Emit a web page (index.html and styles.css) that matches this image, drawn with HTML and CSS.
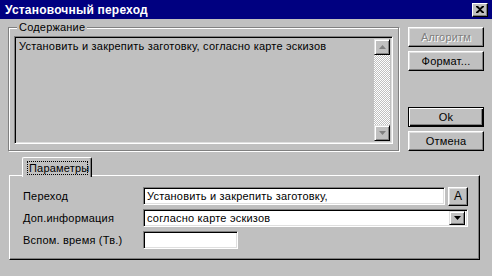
FILE: index.html
```html
<!DOCTYPE html>
<html lang="ru">
<head>
    <meta charset="UTF-8">
    <title>Установочный переход</title>
    <link rel="stylesheet" href="styles.css">
</head>
<body>
    <div class="dialog">
        <div class="titlebar">
            <span class="title">Установочный переход</span>
            <div class="close">
                <svg width="8" height="7" viewBox="0 0 8 7">
                    <path d="M0 0h2l2 2 2-2h2v1l-3 2.5 3 2.5v1h-2l-2-2-2 2h-2v-1l3-2.5-3-2.5z" fill="#000"/>
                </svg>
            </div>
        </div>

        <div class="top">
            <div class="group">
                <span class="group-label">Содержание</span>
                <div class="memo">
                    <div class="memo-text">Установить и закрепить заготовку, согласно карте эскизов</div>
                    <div class="vscroll">
                        <div class="sbtn">
                            <svg width="7" height="4" viewBox="0 0 7 4"><path d="M3.5 0L7 4H0z" fill="#808080"/></svg>
                        </div>
                        <div class="track"></div>
                        <div class="sbtn">
                            <svg width="7" height="4" viewBox="0 0 7 4"><path d="M0 0h7L3.5 4z" fill="#808080"/></svg>
                        </div>
                    </div>
                </div>
            </div>

            <div class="buttons">
                <div class="btn disabled">Алгоритм</div>
                <div class="btn">Формат...</div>
                <div class="spacer"></div>
                <div class="btn default">Ok</div>
                <div class="btn">Отмена</div>
            </div>
        </div>

        <div class="tabs">
            <div class="tab"><span class="focus">Параметры</span></div>
        </div>
        <div class="panel">
            <div class="row">
                <span class="label">Переход</span>
                <div class="field wide">Установить и закрепить заготовку,</div>
                <div class="btn small">A</div>
            </div>
            <div class="row">
                <span class="label">Доп.информация</span>
                <div class="field combo">
                    <span class="combo-text">согласно карте эскизов</span>
                    <div class="drop">
                        <svg width="7" height="4" viewBox="0 0 7 4"><path d="M0 0h7L3.5 4z" fill="#000"/></svg>
                    </div>
                </div>
            </div>
            <div class="row">
                <span class="label">Вспом. время (Тв.)</span>
                <div class="field short"></div>
            </div>
        </div>
    </div>
</body>
</html>
```

FILE: styles.css
```css
* {
    box-sizing: border-box;
}

body {
    margin: 0;
    font-family: "Liberation Sans", Arial, sans-serif;
    font-size: 11px;
    letter-spacing: 0.2px;
    color: #000;
    background-color: #c0c0c0;
}

.dialog {
    width: 492px;
    height: 276px;
    background-color: #c0c0c0;
}

.titlebar {
    height: 19px;
    display: flex;
    align-items: center;
    padding: 0 4px 0 5px;
    background-color: #000080;
    color: #fff;
    font-weight: bold;
    font-size: 12px;
}

.close {
    margin-left: auto;
    width: 16px;
    height: 14px;
    display: flex;
    justify-content: center;
    align-items: center;
    background-color: #c0c0c0;
    border: 1px solid;
    border-color: #fff #000 #000 #fff;
    box-shadow: inset -1px -1px #808080;
}

.top {
    height: 138px;
    display: flex;
    padding: 8px 0 0 8px;
}

.group {
    position: relative;
    width: 391px;
    height: 124px;
    padding: 8px 0 0 5px;
    border: 1px solid #808080;
    box-shadow: inset 1px 1px #fff, 1px 1px #fff;
}

.group-label {
    position: absolute;
    top: -7px;
    left: 8px;
    padding: 0 2px;
    background-color: #c0c0c0;
    line-height: 13px;
}

.memo {
    width: 379px;
    height: 108px;
    display: flex;
    border: 1px solid;
    border-color: #808080 #fff #fff #808080;
    box-shadow: inset 1px 1px #000, inset -1px -1px #dfdfdf;
    padding: 2px;
}

.memo-text {
    flex: 1;
    padding: 1px 2px;
    line-height: 13px;
}

.vscroll {
    width: 16px;
    display: flex;
    flex-direction: column;
}

.sbtn {
    height: 16px;
    display: flex;
    justify-content: center;
    align-items: center;
    background-color: #c0c0c0;
    border: 1px solid;
    border-color: #dfdfdf #000 #000 #dfdfdf;
    box-shadow: inset 1px 1px #fff, inset -1px -1px #808080;
}

.track {
    flex: 1;
    background-color: #c0c0c0;
    background-image: repeating-conic-gradient(#fff 0 25%, #c0c0c0 0 50%);
    background-size: 2px 2px;
}

.buttons {
    display: flex;
    flex-direction: column;
    gap: 4px;
    margin-left: 9px;
}

.btn {
    width: 76px;
    height: 20px;
    display: flex;
    justify-content: center;
    align-items: center;
    background-color: #c0c0c0;
    border: 1px solid;
    border-color: #fff #000 #000 #fff;
    box-shadow: inset -1px -1px #808080, inset 1px 1px #dfdfdf;
}

.btn.disabled {
    color: #808080;
    text-shadow: 1px 1px #fff;
}

.btn.default {
    border: 1px solid #000;
    box-shadow: inset 1px 1px #fff, inset -1px -1px #000, inset -2px -2px #808080;
}

.spacer {
    height: 28px;
}

.tabs {
    display: flex;
    padding-left: 22px;
    height: 19px;
    margin-bottom: -1px;
}

.tab {
    position: relative;
    z-index: 1;
    width: 70px;
    height: 20px;
    padding: 3px 3px 0 4px;
    background-color: #c0c0c0;
    border-top: 1px solid #fff;
    border-left: 1px solid #fff;
    border-right: 1px solid #000;
    box-shadow: inset -1px 0 #808080;
    border-radius: 2px 2px 0 0;
}

.focus {
    display: block;
    border: 1px dotted #000;
    padding: 0 1px;
    line-height: 12px;
}

.panel {
    margin-left: 9px;
    width: 471px;
    height: 85px;
    padding: 11px 0 0 13px;
    border: 1px solid;
    border-color: #fff #000 #000 #fff;
    box-shadow: inset -1px -1px #808080;
}

.row {
    display: flex;
    align-items: center;
    height: 18px;
    margin-bottom: 4px;
}

.label {
    width: 120px;
}

.field {
    height: 18px;
    display: flex;
    align-items: center;
    background-color: #fff;
    border: 1px solid;
    border-color: #808080 #fff #fff #808080;
    box-shadow: inset 1px 1px #000, inset -1px -1px #dfdfdf;
    padding: 0 3px;
}

.field.wide {
    width: 302px;
}

.field.combo {
    width: 325px;
    padding-right: 2px;
}

.combo-text {
    flex: 1;
}

.drop {
    width: 16px;
    height: 14px;
    display: flex;
    justify-content: center;
    align-items: center;
    background-color: #c0c0c0;
    border: 1px solid;
    border-color: #dfdfdf #000 #000 #dfdfdf;
    box-shadow: inset 1px 1px #fff, inset -1px -1px #808080;
}

.field.short {
    width: 95px;
}

.btn.small {
    width: 20px;
    height: 19px;
    margin-left: 3px;
    font-size: 12px;
}
```
